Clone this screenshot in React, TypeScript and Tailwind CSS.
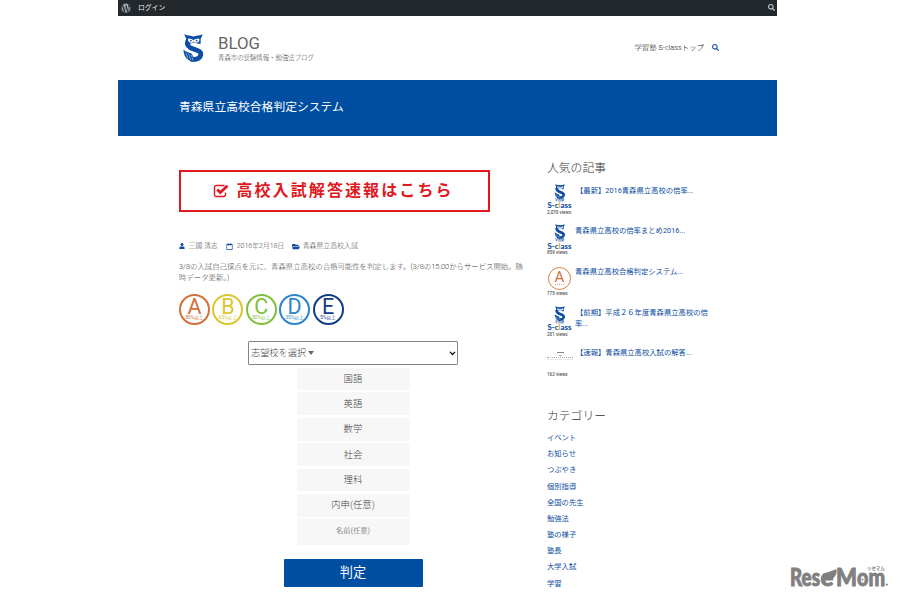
import { FaWordpress, FaUser, FaRegCalendar, FaFolderOpen, FaSearch } from "react-icons/fa";

interface Post {
  title: string;
  views: string;
  thumb: "logo" | "rank" | "doc";
  indent?: boolean;
}

const posts: Post[] = [
  { title: "【最新】2016青森県立高校の倍率...", views: "2,070 views", thumb: "logo", indent: true },
  { title: "青森県立高校の倍率まとめ2016...", views: "859 views", thumb: "logo" },
  { title: "青森県立高校合格判定システム...", views: "775 views", thumb: "rank" },
  { title: "【前期】平成２６年度青森県立高校の倍率...", views: "201 views", thumb: "logo", indent: true },
  { title: "【速報】青森県立高校入試の解答...", views: "162 views", thumb: "doc", indent: true },
];

const categories = [
  "イベント",
  "お知らせ",
  "つぶやき",
  "個別指導",
  "全国の先生",
  "勉強法",
  "塾の様子",
  "塾長",
  "大学入試",
  "学習",
];

const ranks = [
  { letter: "A", note: "80%以上", style: "border-[#d4703a] text-[#d4703a]" },
  { letter: "B", note: "65%以上", style: "border-[#dcc52e] text-[#dcc52e]" },
  { letter: "C", note: "50%以上", style: "border-[#7fbf3a] text-[#7fbf3a]" },
  { letter: "D", note: "35%以上", style: "border-[#2a86c8] text-[#2a86c8]" },
  { letter: "E", note: "5%以上", style: "border-[#123c86] text-[#123c86]" },
];

const fields = [
  { label: "国語", style: "h-[22.5px] text-[9.4px]" },
  { label: "英語", style: "h-[23px] text-[9.4px]" },
  { label: "数学", style: "h-[23px] text-[9.4px]" },
  { label: "社会", style: "h-[23px] text-[9.4px]" },
  { label: "理科", style: "h-[22.5px] text-[9.4px]" },
  { label: "内申(任意)", style: "h-[23px] text-[9.4px]" },
  { label: "名前(任意)", style: "h-[27px] text-[7.3px] -mt-[1px]" },
];

function OwlLogo({ className }: { className: string }) {
  return (
    <svg viewBox="0 0 22 30" className={className} fill="none">
      <path
        d="M4.500 9C4 13 6.500 14.500 11 16C16.500 17.800 19.300 19 18.500 22.500C17.500 26.500 12 27.800 8 26.500"
        stroke="#0b4da2"
        strokeWidth="5"
      />
      <path
        d="M1.500 .500C5 2.300 8 1.500 11 3C14 1.500 17 2.300 20.500 .500C20.300 2.500 19 3.500 18.500 5.500L18.500 10.500H15.500C14 9.300 8 9.300 7 11H2.500C1.700 8.500 2.800 7 3.500 5C2.500 3.500 1.700 2.500 1.500 .500Z"
        fill="#0b4da2"
      />
      <path d="M5.500 5.200C8 5 9.500 6 11 7C12.500 6 14.500 5 17 5.200C18 8.500 14.500 10.300 11 9C8 10.300 4.500 8.500 5.500 5.200Z" fill="#fff" />
      <circle cx="8.200" cy="7.200" r=".9" fill="#0b4da2" />
      <circle cx="14.200" cy="7.200" r=".9" fill="#0b4da2" />
      <path d="M10.200 8h1.600L11 10Z" fill="#d9a95b" />
      <path d="M.5 16.500C2.500 19 6 19.500 8.500 20.500C10.500 22.500 11.500 26 13 29C7 30 .5 25.500 .5 16.500Z" fill="#0b4da2" />
      <path d="M3 20L5 26M5.800 20.800L8 27.500M8.600 22L10.500 28" stroke="#fff" strokeWidth=".5" />
    </svg>
  );
}

function Thumb({ kind }: { kind: Post["thumb"] }) {
  if (kind === "rank") {
    return (
      <div className="mt-[2px] ml-[2px] flex h-[23px] w-[23px] flex-col items-center rounded-full border-[1.5px] border-[#d4803f] text-[#d4703a]">
        <span className="mt-[3px] text-[15px] leading-[12px]">A</span>
        <span className="mt-[1px] h-px w-[9px] border-t border-dotted border-[#e3a57e]" />
      </div>
    );
  }
  if (kind === "doc") {
    return (
      <div className="flex h-[25px] w-[27px] flex-col items-center pt-[6px] pl-px">
        <span className="h-px w-[7px] bg-[#888]" />
        <span className="mt-[2px] h-px w-[3px] bg-[#aaa]" />
        <span className="mt-[1px] h-px w-[26px] border-t border-dotted border-[#aaa]" />
        <span className="mt-[1px] h-px w-[26px] bg-[#e8e8e8]" />
      </div>
    );
  }
  return (
    <div className="flex h-[25px] w-[27px] flex-col items-center">
      <OwlLogo className="h-[15px] w-[12px] shrink-0" />
      <span className="text-[3px] leading-[3.5px] font-bold text-[#0b4da2]">学習塾</span>
      <span className="font-['Lato',sans-serif] text-[7.8px] leading-[7px] font-black whitespace-nowrap text-[#0b4da2]">
        S-c<span className="text-[#d9b13b]">l</span>ass
      </span>
    </div>
  );
}

function TopBar() {
  return (
    <div className="flex h-[15.5px] items-center bg-[#23282d] pr-[2px] pl-[3px] text-[#eee]">
      <FaWordpress className="h-[10px] w-[10px] text-[#a7aaad]" />
      <span className="ml-[7px] text-[6.8px]">ログイン</span>
      <FaSearch className="ml-auto h-[7px] w-[7px] text-[#ccc]" />
    </div>
  );
}

function Header() {
  return (
    <header className="flex h-[64.5px] items-start pr-[58px] pl-[65px]">
      <OwlLogo className="mt-[17px] h-[30px] w-[21px]" />
      <div className="ml-[14px] pt-[17px]">
        <h1 className="text-[16.8px] leading-[20px] text-[#666]">BLOG</h1>
        <p className="mt-[1px] text-[6.4px] leading-[9px] font-light text-[#444]">青森市の受験情報・勉強法ブログ</p>
      </div>
      <nav className="mt-[27px] ml-auto flex items-center text-[7.4px] leading-[10px] font-light text-[#222]">
        学習塾 S-classトップ
        <FaSearch className="ml-[8px] h-[7px] w-[7px] text-[#0b4da2]" />
      </nav>
    </header>
  );
}

function JudgeForm() {
  return (
    <form className="mt-[16px] flex w-[348px] flex-col items-center font-light">
      <div className="flex h-[24px] w-[210px] items-center justify-between rounded-[1px] border border-[#858585] pr-[1px] pl-[2px] text-[9.2px] text-[#444]">
        <span className="flex items-center">
          志望校を選択
          <svg viewBox="0 0 6 4" className="ml-[1.500px] h-[4px] w-[6px]">
            <path d="M0 0H6L3 4Z" fill="#666" />
          </svg>
        </span>
        <svg viewBox="0 0 8 6" className="h-[5px] w-[7px]" fill="none">
          <path d="M1 1L4 4.2L7 1" stroke="#111" strokeWidth="1.6" />
        </svg>
      </div>
      <div className="mt-[2.600px] flex w-[113px] flex-col gap-[2.4px]">
        {fields.map((field) => (
          <div
            key={field.label}
            className={`flex items-center justify-center rounded-[1px] bg-[#f7f7f7] text-[#444] ${field.style}`}
          >
            {field.label}
          </div>
        ))}
      </div>
      <button
        type="button"
        className="mt-[14px] flex h-[28px] w-[139px] items-center justify-center rounded-[1px] bg-[#004ea2] pb-[1px] text-[13.2px] font-normal text-white"
      >
        判定
      </button>
    </form>
  );
}

function Article() {
  return (
    <main className="w-[348px]">
      <a className="flex h-[42px] w-[311px] items-center justify-center border-2 border-[#e0191f] pr-[2px] pb-[1px] text-[#e0191f]">
        <svg viewBox="0 0 16 14" className="mr-[7px] h-[14px] w-[16px]" fill="none">
          <path d="M12.500 8.500V10.500Q12.500 12.500 10.500 12.500H3.500Q1.500 12.500 1.500 10.500V3.500Q1.500 1.500 3.500 1.500H11.500" stroke="currentColor" strokeWidth="1.4" />
          <path d="M4.200 5.500L7.300 8.500L14.500 1.800" stroke="currentColor" strokeWidth="2.800" />
        </svg>
        <span className="text-[16px] font-bold tracking-[2.1px] whitespace-nowrap">高校入試解答速報はこちら</span>
      </a>
      <div className="mt-[29px] flex h-[10px] items-center text-[6.9px] whitespace-nowrap text-[#444] font-light">
        <FaUser className="h-[6px] w-[6px] text-[#0b4da2]" />
        <span className="ml-[3.500px]">三國 清志</span>
        <FaRegCalendar className="ml-[8px] h-[7px] w-[7px] text-[#0b4da2]" />
        <span className="ml-[4px]">2016年2月18日</span>
        <FaFolderOpen className="ml-[8px] h-[7px] w-[8px] text-[#0b4da2]" />
        <span className="ml-[2.500px]">青森県立高校入試</span>
      </div>
      <p className="mt-[10px] text-[7.38px] leading-[11px] font-light whitespace-nowrap text-[#444]">
        3/8の入試自己採点を元に、青森県立高校の合格可能性を判定します。(3/8の15:00からサービス開始。随
        <br />
        時データ更新。)
      </p>
      <div className="mt-[11px] flex gap-[2.4px]">
        {ranks.map((rank) => (
          <div
            key={rank.letter}
            className={`flex h-[31px] w-[31px] flex-col items-center rounded-full border-2 ${rank.style}`}
          >
            <span className="mt-[3px] text-[21.5px] leading-[16px]">{rank.letter}</span>
            <span className="text-[4.700px] leading-[5px] whitespace-nowrap">{rank.note}</span>
          </div>
        ))}
      </div>
      <JudgeForm />
    </main>
  );
}

function Sidebar() {
  return (
    <aside className="ml-[20px] w-[165px] text-[#0b4da2]">
      <h2 className="-mt-[10px] text-[11.8px] leading-[16px] font-light text-[#333]">人気の記事</h2>
      <ul className="mt-[7.500px]">
        {posts.map((post) => (
          <li key={post.title} className="flex h-[40.7px]">
            <div className="-ml-[1px] w-[29px] shrink-0">
              <Thumb kind={post.thumb} />
              <p className="mt-[1px] ml-[1px] text-[4.600px] leading-[6px] font-medium whitespace-nowrap text-[#555]">{post.views}</p>
            </div>
            <p className={`mt-[1px] text-[7.33px] leading-[11px] ${post.indent ? "indent-[1px]" : ""}`}>{post.title}</p>
          </li>
        ))}
      </ul>
      <h2 className="mt-[21px] text-[11.8px] leading-[16px] font-light text-[#333]">カテゴリー</h2>
      <ul className="mt-[6px]">
        {categories.map((name) => (
          <li key={name} className="h-[16.2px] text-[7.3px] leading-[16.2px]">
            {name}
          </li>
        ))}
      </ul>
    </aside>
  );
}

// Site watermark, floats over the bottom right corner
function Watermark() {
  return (
    <div className="absolute right-[11px] bottom-[9px] text-[#808080]">
      <svg viewBox="0 0 99 28" className="h-[28px] w-[99px] overflow-visible" fill="currentColor" fontFamily="Lato, sans-serif" fontWeight="900" fontSize="24">
        <g stroke="currentColor" strokeWidth=".9">
          <text x="0" y="22.500" textLength="30" lengthAdjust="spacingAndGlyphs">Res</text>
          <text x="30.500" y="22.500" textLength="13" lengthAdjust="spacingAndGlyphs">e</text>
          <text x="46" y="22.500" textLength="21" lengthAdjust="spacingAndGlyphs">M</text>
          <text x="67" y="22.500" textLength="28" lengthAdjust="spacingAndGlyphs">om</text>
        </g>
        <path d="M33 15C34 9 40 9 46.500 6C47.500 11 44.500 16.500 38 17Z" />
        <circle cx="72.500" cy="16.500" r="1" />
        <text x="77" y="6.500" fontSize="4.400" fontFamily="Noto Sans CJK JP, sans-serif" fontWeight="700">リセマム</text>
        <circle cx="96.800" cy="21.500" r="1.100" />
      </svg>
    </div>
  );
}

export default function App() {
  return (
    <div className="relative h-[600px] w-[900px] overflow-hidden bg-white font-['Roboto','Noto_Sans_CJK_JP',sans-serif]">
      <div className="ml-[118px] w-[659px]">
        <TopBar />
        <Header />
        <div className="flex h-[56px] items-center bg-[#004ea2] pb-[1px] pl-[61px] text-[11.8px] text-white">
          青森県立高校合格判定システム
        </div>
        <div className="flex pt-[34px] pl-[61px]">
          <Article />
          <Sidebar />
        </div>
      </div>
      <Watermark />
    </div>
  );
}
